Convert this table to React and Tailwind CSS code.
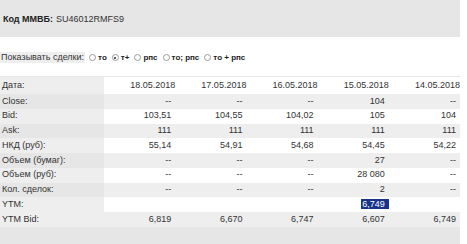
// App.jsx — карточка облигации: код ММВБ, выбор сделок, таблица котировок

const dates = ['18.05.2018', '17.05.2018', '16.05.2018', '15.05.2018', '14.05.2018']

// ─── ДАННЫЕ ТАБЛИЦЫ ─────────────────────────────────────────
// shade: 'dark' — серая строка, 'light' — белая строка, 'flat' — ровная серая
const rows = [
  { label: 'Close:', shade: 'dark', cells: ['--', '--', '--', '104', '--'] },
  { label: 'Bid:', shade: 'light', cells: ['103,51', '104,55', '104,02', '105', '104'] },
  { label: 'Ask:', shade: 'dark', cells: ['111', '111', '111', '111', '111'] },
  { label: 'НКД (руб):', shade: 'light', cells: ['55,14', '54,91', '54,68', '54,45', '54,22'] },
  { label: 'Объем (бумаг):', shade: 'dark', cells: ['--', '--', '--', '27', '--'] },
  { label: 'Объем (руб):', shade: 'light', cells: ['--', '--', '--', '28 080', '--'] },
  { label: 'Кол. сделок:', shade: 'dark', cells: ['--', '--', '--', '2', '--'] },
  { label: 'YTM:', shade: 'light', cells: ['', '', '', 'SEL', ''] },
  { label: 'YTM Bid:', shade: 'flat', cells: ['6,819', '6,670', '6,747', '6,607', '6,749'] },
]

const options = [
  { label: 'то', checked: false },
  { label: 'т+', checked: true },
  { label: 'рпс', checked: false },
  { label: 'то; рпс', checked: false },
  { label: 'то + рпс', checked: false },
]

function Radio({ checked }) {
  return (
    <span className="relative inline-block w-[7px] h-[7px] rounded-full border border-[#9a9a9a] bg-white">
      {checked && <span className="absolute left-[1.5px] top-[1.5px] w-[2px] h-[2px] rounded-full bg-[#222]" />}
    </span>
  )
}

export default function App() {
  return (
    <div className="w-[467px] h-[244px] bg-white text-[#333] overflow-hidden" style={{ fontFamily: '"Liberation Sans", Arial, sans-serif' }}>
      <div className="w-[460px]">

        {/* ── ШАПКА ───────────────────────────── */}
        <div className="h-[37px] bg-[#e6e6e6] flex items-center pl-[3px] pt-[2px] text-[9px]">
          <span className="font-bold text-[#222]">Код ММВБ:</span>
          <span className="ml-[3px] text-[#333]">SU46012RMFS9</span>
        </div>

        {/* ── ВЫБОР СДЕЛОК ────────────────────── */}
        <div className="mt-[15px] h-[11px] flex items-center text-[9px]">
          <span className="h-[11px] bg-[#eeeeee] pl-[1px] pr-[1px] flex items-center">Показывать сделки:</span>
          <div className="flex items-center ml-[4px] gap-[5px]">
            {options.map((o) => (
              <span key={o.label} className="flex items-center gap-[2px]">
                <Radio checked={o.checked} />
                <span className="font-bold text-[8px] text-[#222] mt-[1px]">{o.label}</span>
              </span>
            ))}
          </div>
        </div>

        {/* ── ТАБЛИЦА ─────────────────────────── */}
        <div className="mt-[13px] border-t border-[#e6e6e6] text-[9px]">
          <div className="flex h-[17px] items-center bg-white">
            <div className="w-[104px] h-full bg-[#eeeeee] pl-[2px] flex items-center">Дата:</div>
            {dates.map((d) => (
              <div key={d} className="flex-1 text-right">{d}</div>
            ))}
          </div>

          {rows.map((r) => {
            const labelBg = r.shade === 'dark' ? 'bg-[#e6e6e6]' : 'bg-[#eeeeee]'
            const rowBg = r.shade === 'light' ? 'bg-white' : 'bg-[#eeeeee]'
            return (
              <div key={r.label} className={`flex h-[14.75px] items-center ${rowBg}`}>
                <div className={`w-[104px] h-full pl-[2px] flex items-center ${labelBg}`}>{r.label}</div>
                {r.cells.map((c, i) => (
                  <div key={i} className="flex-1 text-right pr-[4px]">
                    {c === 'SEL' ? (
                      <span className="bg-[#19338a] text-white pl-[1px] pr-[4px] mr-[-4px]">6,749</span>
                    ) : (
                      c
                    )}
                  </div>
                ))}
              </div>
            )
          })}

          <div className="h-[18px] bg-[#e6e6e6]" />
        </div>
      </div>
    </div>
  )
}
